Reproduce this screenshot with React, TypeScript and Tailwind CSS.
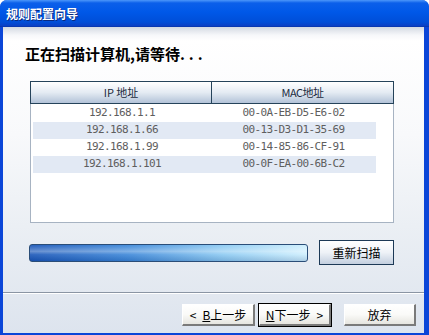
import React from 'react';

const rows = [
  { ip: '192.168.1.1', mac: '00-0A-EB-D5-E6-02' },
  { ip: '192.168.1.66', mac: '00-13-D3-D1-35-69' },
  { ip: '192.168.1.99', mac: '00-14-85-86-CF-91' },
  { ip: '192.168.1.101', mac: '00-0F-EA-00-6B-C2' },
];

const cjk = "font-['Noto_Sans_CJK_SC',sans-serif]";

// classic 3D wizard button
const WizardButton: React.FC<{ isDefault?: boolean; children: React.ReactNode; className?: string }> = ({
  isDefault,
  children,
  className,
}) => (
  <div className={`h-[24px] ${isDefault ? 'border border-black' : 'border border-transparent'} ${className ?? ''}`}>
    <div className="h-full border-t border-l border-white border-r-2 border-b-2 border-r-[#7a7a7a] border-b-[#7a7a7a] bg-gradient-to-b from-white via-[#fafaf8] to-[#e6e5e0] flex items-center justify-center">
      <span className={`${cjk} text-[12px] leading-none text-black flex items-center`}>{children}</span>
    </div>
  </div>
);

export default function App() {
  return (
    <div className="w-[429px] h-[335px] bg-white">
      <div className="w-full h-full flex flex-col rounded-t-[7px] bg-[#0b46d8] overflow-hidden">
        {/* Title bar */}
        <div className="h-[27px] shrink-0 flex items-center pl-[6px] bg-[linear-gradient(to_bottom,#4c97fa_0px,#0b5fea_3px,#0058e8_12px,#004ed8_22px,#0a3fc4_26px,#08309e_27px)]">
          <span className={`${cjk} text-[12px] font-bold text-white [text-shadow:1px_1px_0_#0a2a80] leading-none`}>
            规则配置向导
          </span>
        </div>

        {/* Client area */}
        <div className="flex-1 ml-[3px] mr-[5px] mb-[2px] flex flex-col bg-[linear-gradient(to_bottom,#d3d9e2_0px,#f6f7fa_8px,#ffffff_14px,#f8f9fb_35%,#ebeff4_65%,#dde4ee_100%)]">
          <div className={`${cjk} mt-[17px] ml-[22px] h-[20px] text-[15px] font-bold leading-[20px] text-black`}>
            正在扫描计算机,请等待<span className="tracking-[4px]">...</span>
          </div>

          {/* Table */}
          <div className="mt-[17px] ml-[27px] w-[364px] h-[142px] flex flex-col">
            <div className="h-[23px] shrink-0 flex border border-[#25435a] bg-gradient-to-b from-white via-[#e4ebf3] to-[#b3c3d8]">
              <div className={`${cjk} w-[181px] flex items-center justify-center border-r border-[#25435a] text-[11px] text-[#1b2b3d]`}>
                IP 地址
              </div>
              <div className={`${cjk} flex-1 flex items-center justify-center text-[11px] text-[#1b2b3d] tracking-[-0.5px]`}>
                MAC地址
              </div>
            </div>
            <div className="flex-1 bg-white border-x border-b border-[#a7b3c2] pt-[1px] pl-[2px] pr-[17px]">
              {rows.map((r, i) => (
                <div
                  key={r.ip}
                  className={`h-[17px] flex items-center font-['DejaVu_Sans_Mono',monospace] text-[11px] tracking-[-0.62px] text-[#5e5e5e] ${
                    i % 2 === 1 ? 'bg-[#e2e9f4]' : ''
                  }`}
                >
                  <div className="w-[178px] text-center">{r.ip}</div>
                  <div className="flex-1 text-center">{r.mac}</div>
                </div>
              ))}
            </div>
          </div>

          {/* Progress + rescan */}
          <div className="mt-[17px] ml-[26px] h-[25px] flex items-center gap-[11px]">
            <div className="w-[279px] h-[18px] rounded-[3px] border border-[#2a4d78] overflow-hidden bg-[linear-gradient(to_right,#1a56b8,#3b86d8_35%,#8ccaf2_70%,#cdeefd)]">
              <div className="w-full h-full bg-[linear-gradient(to_bottom,rgba(255,255,255,0.05),rgba(255,255,255,0.35)_40%,rgba(255,255,255,0.1)_60%,rgba(0,30,90,0.15))]" />
            </div>
            <div className={`${cjk} w-[75px] h-[25px] flex items-center justify-center border border-[#1c3956] bg-gradient-to-b from-white via-[#eef2f7] to-[#c3cfdf] text-[12px] text-black`}>
              重新扫描
            </div>
          </div>

          {/* Separator */}
          <div className="mt-[27px] h-[2px] border-t border-[#8a95a4] border-b border-b-white" />

          {/* Wizard buttons */}
          <div className="mt-[9px] h-[24px] flex justify-end pr-[7px]">
            <WizardButton className="w-[75px]">
              <span className="mr-[6px]">&lt;</span>
              <span className="underline">B</span>上一步
            </WizardButton>
            <WizardButton isDefault className="w-[74px] ml-[2px]">
              <span className="underline">N</span>下一步
              <span className="ml-[6px]">&gt;</span>
            </WizardButton>
            <WizardButton className="w-[74px] ml-[11px]">放弃</WizardButton>
          </div>
        </div>
      </div>
    </div>
  );
}
